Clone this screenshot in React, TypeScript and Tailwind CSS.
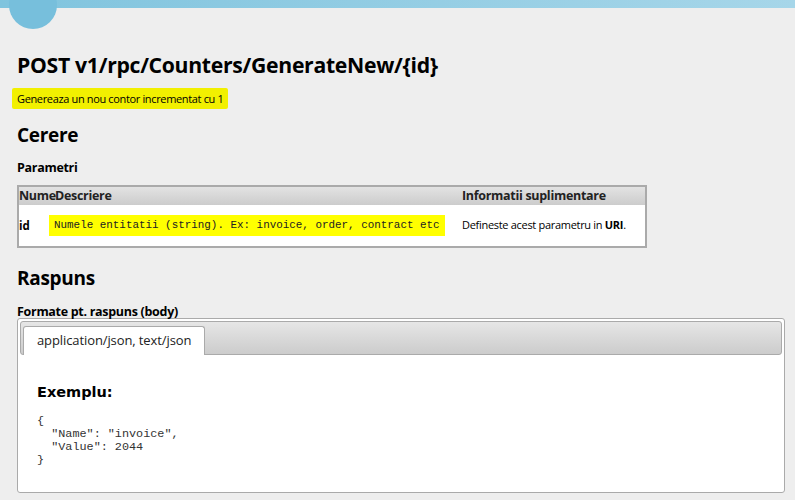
import React from "react";

const sans = { fontFamily: '"Open Sans", "Noto Sans", sans-serif' };
const mono = { fontFamily: '"Liberation Mono", monospace' };

export default function App() {
  return (
    <div className="min-h-[500px] bg-[#eeeeee] text-black relative overflow-hidden" style={sans}>
      <div className="h-[8px] bg-gradient-to-r from-[#80c4de] to-[#a6d6e9]" />
      <div className="absolute left-[9px] top-[-19px] w-[48px] h-[48px] rounded-full bg-[#77bfdc]" />
      <div className="px-[17px]">
        <h1 className="mt-[42px] text-[21.2px] leading-[30px] font-bold tracking-[-0.3px]">
          POST v1/rpc/Counters/GenerateNew/{"{id}"}
        </h1>
        <div className="mt-[10px] text-[11px] leading-[18px] tracking-[-0.35px]">
          <span className="ml-[-5px] bg-[#f2f000] px-[5px] py-[3px] rounded-[2px]">
            Genereaza un nou contor incrementat cu 1
          </span>
        </div>
        <h2 className="mt-[14px] text-[19px] leading-[26px] font-bold tracking-[-0.3px]">Cerere</h2>
        <div className="mt-[11px] text-[12.5px] leading-[18px] font-bold tracking-[-0.3px]">Parametri</div>
        <table className="mt-[8px] w-[630px] table-fixed border-2 border-[#aaaaaa] border-collapse bg-white text-[12px]">
          <colgroup>
            <col className="w-[37px]" />
            <col className="w-[407px]" />
            <col />
          </colgroup>
          <thead>
            <tr className="bg-gradient-to-b from-[#e4e4e4] to-[#cccccc] h-[18px] text-left text-[12.5px] font-bold text-[#222]">
              <th className="p-0 font-bold leading-[18px] tracking-[-0.3px]">Nume</th>
              <th className="p-0 font-bold leading-[18px] tracking-[-0.3px]">Descriere</th>
              <th className="p-0 font-bold leading-[18px] tracking-[-0.3px]">Informatii suplimentare</th>
            </tr>
          </thead>
          <tbody>
            <tr className="h-[42px]">
              <td className="p-0 font-bold text-[11.5px]">id</td>
              <td className="p-0 overflow-visible whitespace-nowrap">
                <span
                  className="ml-[-6px] inline-block bg-[#ffff00] px-[5px] py-[4px] text-[10.9px] leading-[13px] text-[#222]"
                  style={mono}
                >
                  Numele entitatii (string). Ex: invoice, order, contract etc
                </span>
              </td>
              <td className="p-0 text-[11px] tracking-[-0.3px] whitespace-nowrap">
                Defineste acest parametru in <b>URI</b>.
              </td>
            </tr>
          </tbody>
        </table>
        <h2 className="mt-[17px] text-[19px] leading-[26px] font-bold tracking-[-0.3px]">Raspuns</h2>
        <div className="mt-[13px] text-[12.5px] leading-[16px] font-bold tracking-[-0.3px]">Formate pt. raspuns (body)</div>
        <div className="mt-[-2px] w-[768px] h-[175px] border border-[#aaaaaa] rounded-[3px] bg-white p-[2px]">
          <div className="h-[34px] rounded-[3px] border border-[#aaaaaa] bg-gradient-to-b from-[#e6e6e6] to-[#cccccc] flex items-end pl-[2px]">
            <div className="h-[29px] mb-[-1px] px-[13px] bg-white border border-b-0 border-[#aaaaaa] rounded-t-[3px] text-[13px] leading-[27px] text-[#222] tracking-[-0.1px]">
              application/json, text/json
            </div>
          </div>
          <div className="pl-[17px] pt-[28px]">
            <div
              className="text-[14.5px] leading-[18px] font-bold"
              style={{ fontFamily: '"DejaVu Sans", Verdana, sans-serif' }}
            >
              Exemplu:
            </div>
            <pre className="mt-[14px] text-[11.8px] leading-[13px] text-[#333]" style={mono}>
{`{
  "Name": "invoice",
  "Value": 2044
}`}
            </pre>
          </div>
        </div>
      </div>
    </div>
  );
}
